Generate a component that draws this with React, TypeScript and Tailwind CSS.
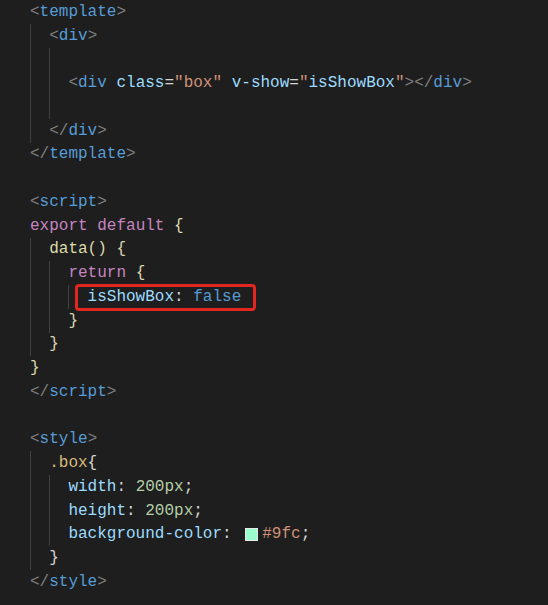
import React from "react";

type Tok = [string, string];

interface Line {
  indent: number;
  guides: number;
  toks: Tok[];
  mark?: boolean;
}

const C = {
  br: "text-[#808080]",
  tag: "text-[#569cd6]",
  attr: "text-[#9cdcfe]",
  str: "text-[#ce9178]",
  kw: "text-[#c586c0]",
  fn: "text-[#dcdcaa]",
  p: "text-[#d4d4d4]",
  brace: "text-[#dcd6b0]",
  sel: "text-[#d7ba7d]",
  num: "text-[#b5cea8]",
  bool: "text-[#569cd6]",
};

const lines: Line[] = [
  { indent: 0, guides: 0, toks: [["<", C.br], ["template", C.tag], [">", C.br]] },
  { indent: 1, guides: 1, toks: [["<", C.br], ["div", C.tag], [">", C.br]] },
  { indent: 0, guides: 2, toks: [] },
  {
    indent: 2,
    guides: 2,
    toks: [
      ["<", C.br],
      ["div", C.tag],
      [" ", C.p],
      ["class", C.attr],
      ["=", C.p],
      ['"box"', C.str],
      [" ", C.p],
      ["v-show", C.attr],
      ["=", C.p],
      ['"', C.str],
      ["isShowBox", C.attr],
      ['"', C.str],
      ["></", C.br],
      ["div", C.tag],
      [">", C.br],
    ],
  },
  { indent: 0, guides: 2, toks: [] },
  { indent: 1, guides: 1, toks: [["</", C.br], ["div", C.tag], [">", C.br]] },
  { indent: 0, guides: 0, toks: [["</", C.br], ["template", C.tag], [">", C.br]] },
  { indent: 0, guides: 0, toks: [] },
  { indent: 0, guides: 0, toks: [["<", C.br], ["script", C.tag], [">", C.br]] },
  { indent: 0, guides: 0, toks: [["export", C.kw], [" ", C.p], ["default", C.kw], [" ", C.p], ["{", C.brace]] },
  { indent: 1, guides: 1, toks: [["data", C.fn], ["()", C.brace], [" ", C.p], ["{", C.brace]] },
  { indent: 2, guides: 2, toks: [["return", C.kw], [" ", C.p], ["{", C.brace]] },
  { indent: 3, guides: 3, mark: true, toks: [["isShowBox", C.attr], [": ", C.p], ["false", C.bool]] },
  { indent: 2, guides: 2, toks: [["}", C.brace]] },
  { indent: 1, guides: 1, toks: [["}", C.brace]] },
  { indent: 0, guides: 0, toks: [["}", C.brace]] },
  { indent: 0, guides: 0, toks: [["</", C.br], ["script", C.tag], [">", C.br]] },
  { indent: 0, guides: 0, toks: [] },
  { indent: 0, guides: 0, toks: [["<", C.br], ["style", C.tag], [">", C.br]] },
  { indent: 1, guides: 1, toks: [[".box", C.sel], ["{", C.p]] },
  { indent: 2, guides: 2, toks: [["width", C.attr], [": ", C.p], ["200px", C.num], [";", C.p]] },
  { indent: 2, guides: 2, toks: [["height", C.attr], [": ", C.p], ["200px", C.num], [";", C.p]] },
  {
    indent: 2,
    guides: 2,
    toks: [["background-color", C.attr], [": ", C.p], ["#swatch", ""], ["#9fc", C.str], [";", C.p]],
  },
  { indent: 1, guides: 1, toks: [["}", C.p]] },
  { indent: 0, guides: 0, toks: [["</", C.br], ["style", C.tag], [">", C.br]] },
];

const CodeLine: React.FC<{ line: Line }> = ({ line }) => {
  const cols = Math.max(line.indent, line.guides);
  const content = line.toks.map(([t, c], i) =>
    t === "#swatch" ? (
      <span
        key={i}
        className="inline-block w-[13px] h-[13px] ml-[4px] mr-[4px] bg-[#99ffcc] border border-[#e8e8e8]"
      />
    ) : (
      <span key={i} className={c}>
        {t}
      </span>
    )
  );
  return (
    <div className="flex h-[23.75px] items-center whitespace-pre">
      {Array.from({ length: cols }).map((_, i) => (
        <span
          key={i}
          className={
            i < line.guides
              ? "w-[2ch] h-full shrink-0 border-l border-[#404040]"
              : "w-[2ch] h-full shrink-0"
          }
        />
      ))}
      {line.mark ? (
        <span className="relative">
          {content}
          <span className="absolute left-[-13px] right-[-15px] top-[-1px] bottom-[-2px] border-[3px] border-[#e3261f] rounded-[4px]" />
        </span>
      ) : (
        content
      )}
    </div>
  );
};

export default function App() {
  return (
    <div className="min-h-screen w-full bg-[#1e1e1e] pl-[30px] font-['Liberation_Mono',monospace] text-[16px] text-[#d4d4d4]">
      {lines.map((l, i) => (
        <CodeLine key={i} line={l} />
      ))}
    </div>
  );
}
